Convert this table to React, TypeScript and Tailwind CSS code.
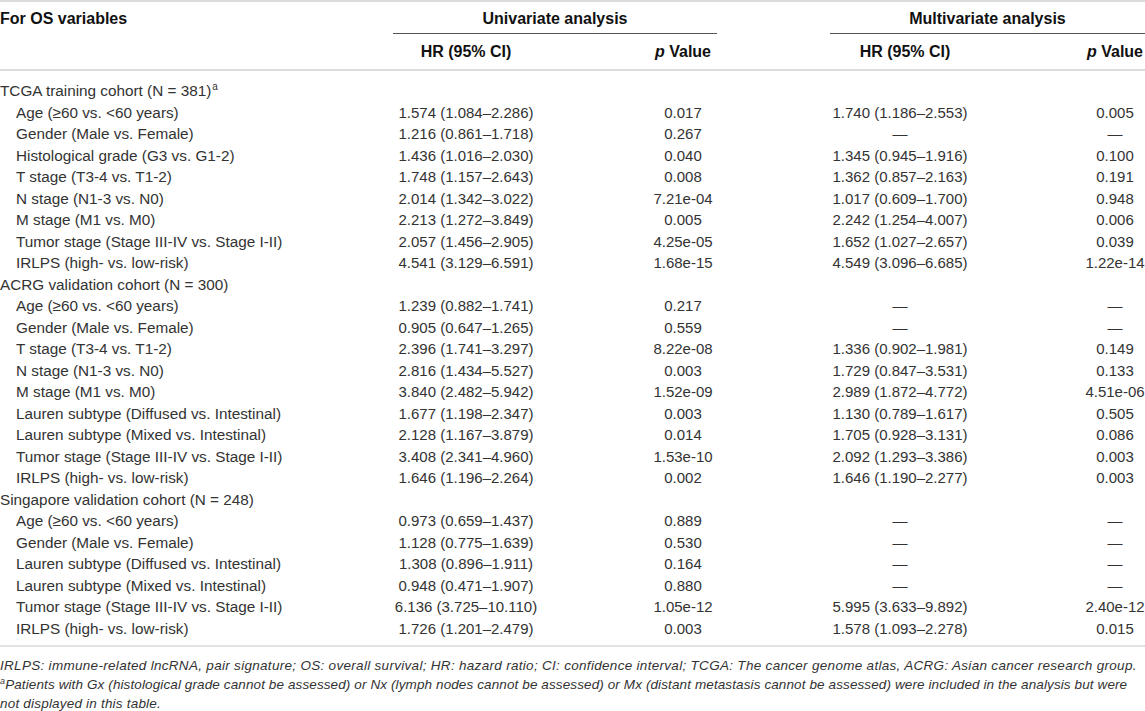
import React from "react";

type Row = { label: string; hu?: string; pu?: string; hm?: string; pm?: string; head?: boolean; sup?: string };

const D = "—";
const rows: Row[] = [
  { label: "TCGA training cohort (N = 381)", head: true, sup: "a" },
  { label: "Age (≥60 vs. <60 years)", hu: "1.574 (1.084–2.286)", pu: "0.017", hm: "1.740 (1.186–2.553)", pm: "0.005" },
  { label: "Gender (Male vs. Female)", hu: "1.216 (0.861–1.718)", pu: "0.267", hm: D, pm: D },
  { label: "Histological grade (G3 vs. G1-2)", hu: "1.436 (1.016–2.030)", pu: "0.040", hm: "1.345 (0.945–1.916)", pm: "0.100" },
  { label: "T stage (T3-4 vs. T1-2)", hu: "1.748 (1.157–2.643)", pu: "0.008", hm: "1.362 (0.857–2.163)", pm: "0.191" },
  { label: "N stage (N1-3 vs. N0)", hu: "2.014 (1.342–3.022)", pu: "7.21e-04", hm: "1.017 (0.609–1.700)", pm: "0.948" },
  { label: "M stage (M1 vs. M0)", hu: "2.213 (1.272–3.849)", pu: "0.005", hm: "2.242 (1.254–4.007)", pm: "0.006" },
  { label: "Tumor stage (Stage III-IV vs. Stage I-II)", hu: "2.057 (1.456–2.905)", pu: "4.25e-05", hm: "1.652 (1.027–2.657)", pm: "0.039" },
  { label: "IRLPS (high- vs. low-risk)", hu: "4.541 (3.129–6.591)", pu: "1.68e-15", hm: "4.549 (3.096–6.685)", pm: "1.22e-14" },
  { label: "ACRG validation cohort (N = 300)", head: true },
  { label: "Age (≥60 vs. <60 years)", hu: "1.239 (0.882–1.741)", pu: "0.217", hm: D, pm: D },
  { label: "Gender (Male vs. Female)", hu: "0.905 (0.647–1.265)", pu: "0.559", hm: D, pm: D },
  { label: "T stage (T3-4 vs. T1-2)", hu: "2.396 (1.741–3.297)", pu: "8.22e-08", hm: "1.336 (0.902–1.981)", pm: "0.149" },
  { label: "N stage (N1-3 vs. N0)", hu: "2.816 (1.434–5.527)", pu: "0.003", hm: "1.729 (0.847–3.531)", pm: "0.133" },
  { label: "M stage (M1 vs. M0)", hu: "3.840 (2.482–5.942)", pu: "1.52e-09", hm: "2.989 (1.872–4.772)", pm: "4.51e-06" },
  { label: "Lauren subtype (Diffused vs. Intestinal)", hu: "1.677 (1.198–2.347)", pu: "0.003", hm: "1.130 (0.789–1.617)", pm: "0.505" },
  { label: "Lauren subtype (Mixed vs. Intestinal)", hu: "2.128 (1.167–3.879)", pu: "0.014", hm: "1.705 (0.928–3.131)", pm: "0.086" },
  { label: "Tumor stage (Stage III-IV vs. Stage I-II)", hu: "3.408 (2.341–4.960)", pu: "1.53e-10", hm: "2.092 (1.293–3.386)", pm: "0.003" },
  { label: "IRLPS (high- vs. low-risk)", hu: "1.646 (1.196–2.264)", pu: "0.002", hm: "1.646 (1.190–2.277)", pm: "0.003" },
  { label: "Singapore validation cohort (N = 248)", head: true },
  { label: "Age (≥60 vs. <60 years)", hu: "0.973 (0.659–1.437)", pu: "0.889", hm: D, pm: D },
  { label: "Gender (Male vs. Female)", hu: "1.128 (0.775–1.639)", pu: "0.530", hm: D, pm: D },
  { label: "Lauren subtype (Diffused vs. Intestinal)", hu: "1.308 (0.896–1.911)", pu: "0.164", hm: D, pm: D },
  { label: "Lauren subtype (Mixed vs. Intestinal)", hu: "0.948 (0.471–1.907)", pu: "0.880", hm: D, pm: D },
  { label: "Tumor stage (Stage III-IV vs. Stage I-II)", hu: "6.136 (3.725–10.110)", pu: "1.05e-12", hm: "5.995 (3.633–9.892)", pm: "2.40e-12" },
  { label: "IRLPS (high- vs. low-risk)", hu: "1.726 (1.201–2.479)", pu: "0.003", hm: "1.578 (1.093–2.278)", pm: "0.015" },
];

const grid = "grid grid-cols-[385px_162px_178px_97px_156px_107px_60px]";

function Cell({ children, className = "" }: { children?: React.ReactNode; className?: string }) {
  return <div className={`flex justify-center whitespace-nowrap ${className}`}>{children}</div>;
}

export default function App() {
  return (
    <div
      className="w-[1145px] h-[711px] bg-white text-[#333333] overflow-hidden"
      style={{ fontFamily: '"Liberation Sans", Arial, sans-serif' }}
    >
      <div className="border-t-2 border-[#dcdcdc]">
        {/* header row 1 */}
        <div className={`${grid} h-[32px] text-[16px] font-bold text-[#111111]`}>
          <div className="pt-[8px] leading-[18px]">For OS variables</div>
          <div className="col-span-2 mx-[8px] border-b border-[#555] pt-[8px] leading-[18px] text-center">Univariate analysis</div>
          <div></div>
          <div className="col-span-3 ml-[8px] border-b border-[#555] pt-[8px] leading-[18px] text-center">Multivariate analysis</div>
        </div>
        {/* header row 2 */}
        <div className={`${grid} h-[37px] text-[16px] font-bold text-[#111111] border-b-2 border-[#dcdcdc] pt-[9px] leading-[18px]`}>
          <div></div>
          <Cell>HR (95% CI)</Cell>
          <Cell className="pl-[94px]"><span><i>p</i> Value</span></Cell>
          <div></div>
          <Cell className="pl-[10px]">HR (95% CI)</Cell>
          <div></div>
          <Cell><span><i>p</i> Value</span></Cell>
        </div>
      </div>
      {/* body */}
      <div className="pt-[9px] pb-[6px] border-b-2 border-[#e2e2e2] text-[15px]">
        {rows.map((r, i) => (
          <div key={i} className={`${grid} h-[21.5px] leading-[21.5px]`}>
            <div className={`whitespace-nowrap text-[15.3px] ${r.head ? "" : "pl-[16px]"}`}>
              {r.label}
              {r.sup && <sup className="text-[10px] top-[-6px] ml-[1px]">{r.sup}</sup>}
            </div>
            <Cell>{r.hu}</Cell>
            <Cell className="pl-[94px]">{r.pu}</Cell>
            <div></div>
            <Cell>{r.hm}</Cell>
            <div></div>
            <Cell>{r.pm}</Cell>
          </div>
        ))}
      </div>
      {/* footnote */}
      <div className="pt-[9px] italic leading-[19px] text-[#333333] whitespace-nowrap">
        <p className="text-[13.5px] tracking-[0.3px]">
          IRLPS: immune-related lncRNA, pair signature; OS: overall survival; HR: hazard ratio; CI: confidence interval; TCGA: The cancer genome atlas, ACRG: Asian cancer research group.
        </p>
        <p className="text-[13.5px] tracking-[0.11px]">
          <sup className="text-[9px] top-[-5px]">a</sup>Patients with Gx (histological grade cannot be assessed) or Nx (lymph nodes cannot be assessed) or Mx (distant metastasis cannot be assessed) were included in the analysis but were
        </p>
        <p className="text-[13.5px] tracking-[0.2px]">not displayed in this table.</p>
      </div>
    </div>
  );
}
